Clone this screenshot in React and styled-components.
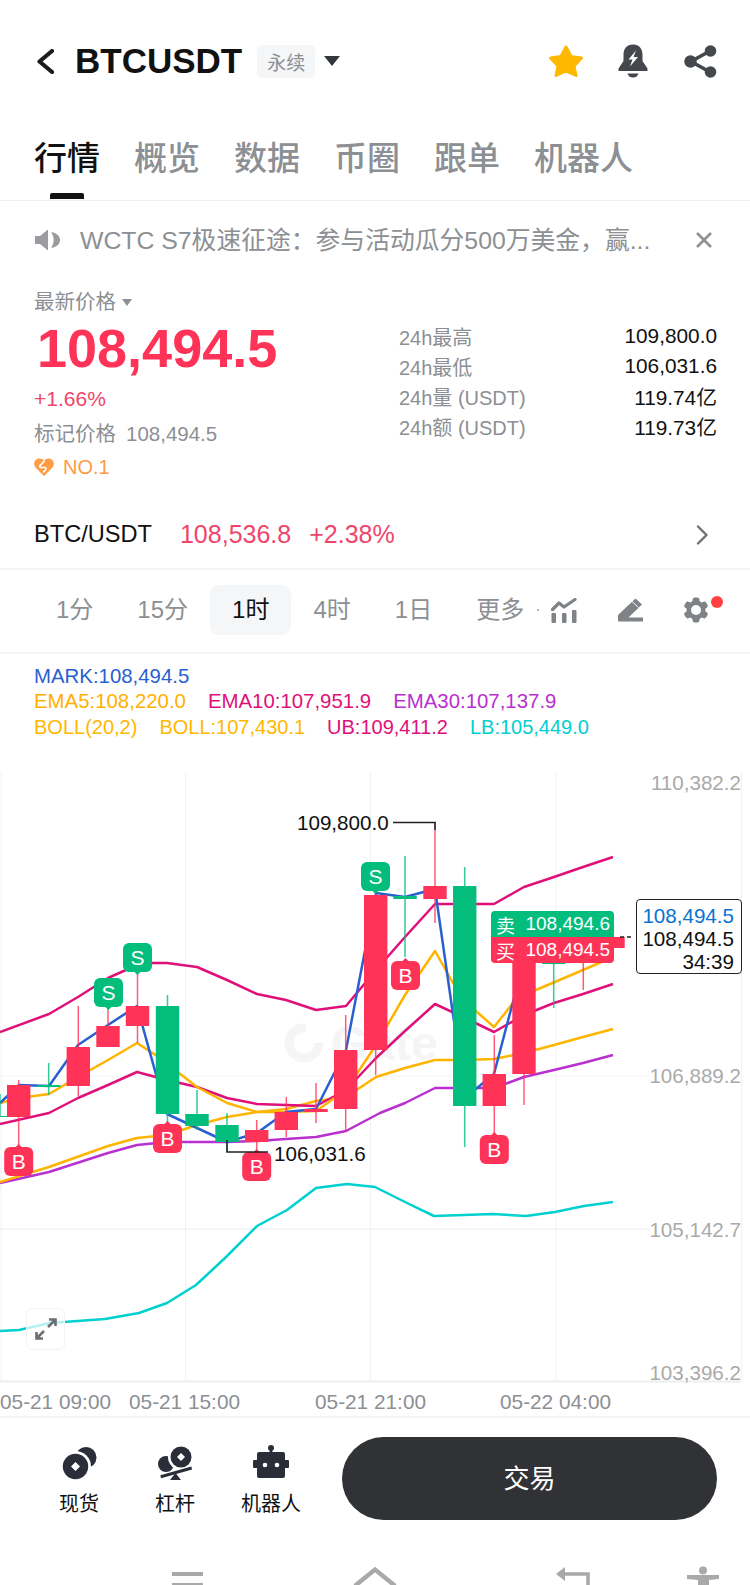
import React from 'react'
import styled, { createGlobalStyle } from 'styled-components'

const GREEN = '#03bd7c'
const RED = '#ff3358'
const GRAY = '#8c8f93'
const FONT = '"Liberation Sans", "Noto Sans CJK SC", sans-serif'

const GlobalStyle = createGlobalStyle`
  html, body {
    margin: 0;
    padding: 0;
    background: #fff;
    font-family: ${FONT};
  }
  * { box-sizing: border-box; }
`

const Page = styled.div`
  width: 750px;
  height: 1585px;
  overflow: hidden;
  background: #fff;
  color: #111;
`

const Header = styled.div`
  height: 122px;
  display: flex;
  align-items: center;
  padding: 0 33px 0 37px;
`
const Title = styled.div`
  margin-left: 21px;
  font-size: 35px;
  font-weight: 700;
  color: #111;
`
const Badge = styled.div`
  margin-left: 15px;
  width: 58px;
  height: 33px;
  border-radius: 5px;
  background: #f5f6f7;
  color: ${GRAY};
  font-size: 19px;
  display: flex;
  align-items: center;
  justify-content: center;
`
const HeaderCaret = styled.div`
  margin-left: 9px;
  width: 0;
  height: 0;
  border-left: 8px solid transparent;
  border-right: 8px solid transparent;
  border-top: 10px solid #33363a;
`
const HeaderIcons = styled.div`
  margin-left: auto;
  display: flex;
  align-items: center;
  gap: 34px;
  & > :last-child { margin-left: 2px; }
`

const Tabs = styled.div`
  height: 79px;
  display: flex;
  gap: 34px;
  padding: 18px 0 0 34px;
  border-bottom: 1px solid #f0f0f0;
`
const Tab = styled.div`
  position: relative;
  height: 38px;
  line-height: 38px;
  font-size: 33px;
  font-weight: 500;
  color: ${p => (p.$active ? '#111' : GRAY)};
  ${p => p.$active && `
    &::after {
      content: '';
      position: absolute;
      left: 16px;
      top: 53px;
      width: 34px;
      height: 6px;
      border-radius: 2px 2px 0 0;
      background: #111;
    }
  `}
`

const Notice = styled.div`
  height: 78px;
  display: flex;
  align-items: center;
  padding: 0 37px 0 35px;
  color: ${GRAY};
`
const NoticeText = styled.div`
  margin: -4px 0 0 20px;
  font-size: 24.8px;
  white-space: nowrap;
`
const NoticeClose = styled.div`
  margin-left: auto;
  display: flex;
`

const Info = styled.div`
  height: 226px;
  display: flex;
`
const InfoLeft = styled.div`
  width: 399px;
  padding: 11px 0 0 34px;
`
const PriceLabel = styled.div`
  height: 24px;
  line-height: 24px;
  font-size: 20.5px;
  color: ${GRAY};
  display: flex;
  align-items: center;
`
const SmallCaret = styled.span`
  margin-left: 6px;
  width: 0;
  height: 0;
  border-left: 5px solid transparent;
  border-right: 5px solid transparent;
  border-top: 7px solid ${GRAY};
`
const Price = styled.div`
  margin: 4px 0 0 3px;
  height: 60px;
  line-height: 60px;
  font-size: 54px;
  font-weight: 700;
  color: ${RED};
`
const Change = styled.div`
  margin-top: 8px;
  height: 26px;
  line-height: 26px;
  font-size: 21px;
  color: #f0456a;
`
const MarkRow = styled.div`
  margin-top: 10px;
  height: 24px;
  line-height: 24px;
  font-size: 20.5px;
  color: ${GRAY};
  display: flex;
  gap: 10px;
`
const RankRow = styled.div`
  margin-top: 9px;
  height: 24px;
  display: flex;
  align-items: center;
  gap: 9px;
  color: #ff9a45;
  font-size: 20px;
`
const InfoRight = styled.div`
  flex: 1;
  padding: 42px 33px 0 0;
`
const StatRow = styled.div`
  height: 30px;
  display: flex;
  align-items: center;
  justify-content: space-between;
  font-size: 20.8px;
`
const StatLabel = styled.span`
  color: ${GRAY};
  font-size: 20px;
`

const PairRow = styled.div`
  height: 65px;
  padding: 0 42px 4px 34px;
  display: flex;
  align-items: center;
  border-bottom: 2px solid #f6f6f6;
  font-size: 25px;
`
const PairName = styled.span`
  color: #111;
  font-size: 23.6px;
`
const PairValue = styled.span`
  margin-left: ${p => p.$gap}px;
  color: #f0456a;
`
const PairChevron = styled.div`
  margin-left: auto;
  display: flex;
`

const IntervalRow = styled.div`
  height: 84px;
  padding: 0 42px 2px 34px;
  display: flex;
  align-items: center;
  border-bottom: 2px solid #f6f6f6;
`
const Interval = styled.div`
  height: 50px;
  line-height: 50px;
  padding: 0 22px;
  border-radius: 9px;
  font-size: 24px;
  white-space: nowrap;
  color: ${p => (p.$active ? '#111' : GRAY)};
  background: ${p => (p.$active ? '#f5f6f7' : 'transparent')};
`
const MoreDot = styled.span`
  width: 2px;
  height: 2px;
  margin-left: -9px;
  background: #b5b7ba;
`
const ToolIcons = styled.div`
  margin-left: auto;
  display: flex;
  align-items: center;
  gap: 41px;
`
const GearWrap = styled.div`
  position: relative;
  display: flex;
`
const RedDot = styled.span`
  position: absolute;
  right: -15px;
  top: -1px;
  width: 12px;
  height: 12px;
  border-radius: 50%;
  background: #ff4040;
`

const Legend = styled.div`
  height: 91px;
  padding: 9.5px 0 0 34px;
`
const LegendLine = styled.div`
  height: 25.75px;
  line-height: 25.75px;
  display: flex;
  gap: 22px;
  font-size: ${p => p.$size || 20.4}px;
`
const LegendItem = styled.span`
  color: ${p => p.$color};
  white-space: nowrap;
`

const ChartArea = styled.div`
  position: relative;
  width: 750px;
  height: 671px;
`
const ChartSvg = styled.svg`
  display: block;
`
const AxisText = styled.text`
  font-family: ${FONT};
  font-size: ${p => p.$size || 20.6}px;
  fill: ${p => p.$color || GRAY};
`
const Watermark = styled.text`
  font-family: ${FONT};
  font-size: 48px;
  font-weight: 700;
  fill: #f5f5f5;
`
const MarkerText = styled.text`
  font-family: ${FONT};
  font-size: 21px;
  fill: #fff;
  text-anchor: middle;
`

const QuoteTags = styled.div`
  position: absolute;
  left: 491px;
  top: 166px;
  width: 123px;
  border-radius: 4px;
  overflow: hidden;
`
const QuoteTag = styled.div`
  height: 26px;
  padding: 0 4px 0 5px;
  display: flex;
  align-items: center;
  justify-content: space-between;
  color: #fff;
  font-size: 19px;
  background: ${p => p.$bg};
`
const PriceBox = styled.div`
  position: absolute;
  left: 636px;
  top: 154px;
  width: 106px;
  height: 75px;
  padding: 4px 7px 0 0;
  border: 1.5px solid #222;
  border-radius: 4px;
  background: #fff;
  font-size: 20.6px;
  line-height: 23px;
  text-align: right;
`
const PriceBoxLine = styled.div`
  color: ${p => p.$color || '#111'};
`
const ExpandButton = styled.div`
  position: absolute;
  left: 26px;
  top: 563px;
  width: 39px;
  height: 42px;
  border: 1px solid #f3f3f3;
  border-radius: 6px;
  background: rgba(255, 255, 255, 0.7);
  display: flex;
  align-items: center;
  justify-content: center;
`

const Footer = styled.div`
  height: 124px;
  padding: 19px 33px 0 31px;
  display: flex;
  align-items: flex-start;
  border-top: 2px solid #f6f6f6;
`
const FooterItem = styled.div`
  width: 96px;
  padding-top: 8px;
  display: flex;
  flex-direction: column;
  align-items: center;
`
const FooterIcon = styled.div`
  height: 40px;
  display: flex;
`
const FooterLabel = styled.div`
  margin-top: 7px;
  height: 24px;
  line-height: 24px;
  font-size: 20px;
  color: #111;
  white-space: nowrap;
`
const TradeButton = styled.div`
  margin-left: 23px;
  width: 375px;
  height: 83px;
  padding-bottom: 4px;
  border-radius: 42px;
  background: #303236;
  color: #fff;
  font-size: 26px;
  display: flex;
  align-items: center;
  justify-content: center;
`

const NavBar = styled.div`
  height: 45px;
  padding: 25px 0 0 170px;
  display: flex;
  overflow: hidden;
`
const NavIcon = styled.svg`
  flex: none;
  margin-left: ${p => p.$ml || 0}px;
  fill: #a9a9a9;
`

const toPoints = pts => pts.map(p => p.join(',')).join(' ')

const lines = [
  {
    color: '#00d0d0',
    pts: [[0, 1331], [19, 1330], [50, 1323], [105, 1319], [139, 1313], [167, 1303], [196, 1285], [225, 1258], [257, 1226], [287, 1210], [316, 1188], [347, 1184], [375, 1187], [407, 1203], [434, 1216], [493, 1214], [526, 1216], [555, 1212], [584, 1206], [613, 1202]],
  },
  {
    color: '#b92fd0',
    pts: [[0, 1183], [49, 1172], [108, 1153], [137, 1145], [167, 1142], [197, 1142], [227, 1142], [257, 1141], [286, 1139], [316, 1137], [346, 1131], [380, 1113], [405, 1103], [435, 1088], [465, 1088], [494, 1088], [524, 1077], [554, 1070], [583, 1063], [613, 1055]],
  },
  {
    color: '#ffb400',
    pts: [[0, 1182], [49, 1167], [108, 1146], [137, 1138], [167, 1135], [197, 1125], [227, 1117], [257, 1112], [286, 1109], [316, 1101], [346, 1097], [376, 1077], [405, 1068], [435, 1060], [465, 1060], [494, 1059], [524, 1053], [554, 1045], [583, 1037], [613, 1029]],
  },
  {
    color: '#e0107a',
    pts: [[0, 1124], [49, 1113], [78, 1098], [108, 1085], [137, 1072], [167, 1080], [197, 1087], [227, 1098], [257, 1104], [286, 1105], [316, 1106], [346, 1090], [376, 1058], [405, 1031], [435, 1004], [465, 1018], [494, 1032], [524, 1015], [554, 1003], [583, 994], [613, 984]],
  },
  {
    color: '#ffb400',
    pts: [[0, 1103], [19, 1098], [49, 1094], [78, 1077], [108, 1060], [137, 1043], [157, 1056], [197, 1087], [227, 1103], [257, 1112], [286, 1112], [316, 1111], [346, 1090], [376, 1045], [405, 995], [435, 951], [453, 983], [477, 1012], [494, 1027], [513, 1003], [536, 990], [583, 970], [613, 957]],
  },
  {
    color: '#e0107a',
    pts: [[0, 1032], [49, 1014], [78, 997], [108, 978], [137, 965], [152, 963], [167, 963], [197, 967], [227, 980], [257, 994], [286, 1000], [316, 1010], [346, 1006], [376, 970], [405, 937], [435, 904], [465, 904], [494, 904], [524, 887], [554, 877], [583, 867], [613, 857]],
  },
  {
    color: '#2a5fd0',
    pts: [[0, 1103], [19, 1085], [49, 1086], [78, 1045], [108, 1025], [137, 1006], [167, 1114], [197, 1128], [227, 1142], [257, 1133], [286, 1112], [316, 1109], [346, 1050], [376, 893], [405, 897], [435, 889], [465, 1098], [494, 1074], [524, 960], [554, 963], [583, 955], [613, 940]],
  },
]

// x, body top, body bottom, wick top, wick bottom, colour
const candles = [
  [0, 1116, 1117, 1094, 1117, GREEN],
  [18.7, 1085, 1117, 1080, 1148, RED],
  [48.7, 1085, 1087, 1063, 1095, GREEN],
  [78.3, 1047, 1086, 1006, 1096, RED],
  [108, 1026, 1047, 1006, 1047, RED],
  [137.5, 1006, 1026, 973, 1043, RED],
  [167.5, 1006, 1114, 995, 1123, GREEN],
  [197, 1114, 1126, 1090, 1130, GREEN],
  [227, 1125, 1142, 1113, 1152, GREEN],
  [256.7, 1130, 1142, 1120, 1153, RED],
  [286.3, 1112, 1130, 1097, 1137, RED],
  [316, 1109, 1112, 1083, 1123, RED],
  [345.7, 1050, 1109, 1015, 1132, RED],
  [375.7, 895, 1050, 890, 1075, RED],
  [405, 896, 899, 856, 957, GREEN],
  [435, 886, 899, 822, 923, RED],
  [464.7, 886, 1106, 867, 1147, GREEN],
  [494.3, 1074, 1106, 1035, 1135, RED],
  [524, 950, 1074, 950, 1105, RED],
  [553.7, 963, 964, 940, 1008, GREEN],
  [583.3, 945, 950, 945, 990, RED],
  [613, 937, 948, 937, 948, RED],
]

const markers = [
  ['S', 137.5, 943, GREEN],
  ['S', 108.5, 978, GREEN],
  ['S', 375.5, 862, GREEN],
  ['B', 167.5, 1124, RED],
  ['B', 18.7, 1147, RED],
  ['B', 256.7, 1152, RED],
  ['B', 405.5, 961, RED],
  ['B', 494.3, 1135, RED],
]

const BackIcon = () => (
  <svg width="17" height="25" viewBox="0 0 17 25">
    <path d="M15 2 L2.5 12.5 L15 23" fill="none" stroke="#1c1c1c" strokeWidth="4.2" strokeLinecap="round" strokeLinejoin="round" />
  </svg>
)
const StarIcon = () => (
  <svg width="36" height="34" viewBox="0 0 36 34">
    <polygon points="18,3 23,12.5 33.5,14 26,22 28,31.5 18,27 8,31.5 10,22 2.5,14 13,12.5" fill="#ffb800" stroke="#ffb800" strokeWidth="3" strokeLinejoin="round" />
  </svg>
)
const BellIcon = () => (
  <svg width="30" height="34" viewBox="0 0 30 34">
    <path d="M15 0.5 C8.5 0.5 5.5 5 5.5 11 V17 L0.5 24.5 V27 H29.5 V24.5 L24.5 17 V11 C24.5 5 21.5 0.5 15 0.5Z" fill="#44474c" />
    <path d="M18 6.5 L10.5 15.5 H14.5 L12 22.5 L20 13 H15.5 Z" fill="#fff" />
    <path d="M9.5 29.5 H20.5 C19.5 32.5 17.5 33.5 15 33.5 C12.5 33.5 10.5 32.5 9.5 29.5Z" fill="#44474c" />
  </svg>
)
const ShareIcon = () => (
  <svg width="33" height="33" viewBox="0 0 33 33">
    <path d="M26 6 L7 16.5 L26 27" fill="none" stroke="#44474c" strokeWidth="3.6" />
    <circle cx="26.5" cy="6" r="5.8" fill="#44474c" />
    <circle cx="6.5" cy="16.5" r="6.2" fill="#44474c" />
    <circle cx="26.5" cy="27" r="5.8" fill="#44474c" />
  </svg>
)
const SpeakerIcon = () => (
  <svg width="25" height="22" viewBox="0 0 25 22">
    <path d="M0 7 H5 L13 0.5 V21.5 L5 15 H0 Z" fill="#9a9c9f" />
    <path d="M16 3 C22 4 25 7 25 11 C25 15 22 18 16 19 C19.5 15 19.5 7 16 3 Z" fill="#9a9c9f" />
  </svg>
)
const CloseIcon = () => (
  <svg width="18" height="18" viewBox="0 0 18 18">
    <path d="M2 2 L16 16 M16 2 L2 16" stroke={GRAY} strokeWidth="2.6" />
  </svg>
)
const RankIcon = () => (
  <svg width="20" height="18" viewBox="0 0 20 18">
    <path d="M10 18 L1.5 9.5 C-1.5 5.5 1 0.5 5.5 0.5 C7.5 0.5 9 1.5 10 3 C11 1.5 12.5 0.5 14.5 0.5 C19 0.5 21.5 5.5 18.5 9.5 Z" fill="#ff9a45" />
    <path d="M10.5 3 L6 7.5 C5 9 7 10 9 9.5 C11 9 13 10 11.5 12 L9 14.5" fill="none" stroke="#fff" strokeWidth="1.6" />
  </svg>
)
const ChevronRight = () => (
  <svg width="12" height="20" viewBox="0 0 12 20">
    <path d="M2 1.5 L10.5 10 L2 18.5" fill="none" stroke="#6e7175" strokeWidth="2.4" strokeLinecap="round" strokeLinejoin="round" />
  </svg>
)
const IndicatorIcon = () => (
  <svg width="26" height="25" viewBox="0 0 26 25">
    <path d="M1.5 11.5 L8 5 L13 9 L24 1.5" fill="none" stroke="#7f8286" strokeWidth="3.2" strokeLinecap="round" strokeLinejoin="round" />
    <rect x="0.5" y="15" width="4.5" height="10" rx="1" fill="#7f8286" />
    <rect x="11" y="15" width="4.5" height="10" rx="1" fill="#7f8286" />
    <rect x="21" y="12" width="4.5" height="13" rx="1" fill="#7f8286" />
  </svg>
)
const PenIcon = () => (
  <svg width="25" height="24" viewBox="0 0 25 24">
    <path d="M0 23.5 V17 L17.5 0.5 L24 6.5 L10.5 19.5 H25 V23.5 Z" fill="#7f8286" />
    <path d="M14 3.5 L20.5 9.5" stroke="#fff" strokeWidth="1" />
  </svg>
)
const GearIcon = () => (
  <svg width="24" height="26" viewBox="0 0 24 26">
    <g fill="#7f8286">
      <circle cx="12" cy="13" r="9.5" />
      <rect x="8.5" y="0.5" width="7" height="25" rx="2.5" />
      <rect x="8.5" y="0.5" width="7" height="25" rx="2.5" transform="rotate(60 12 13)" />
      <rect x="8.5" y="0.5" width="7" height="25" rx="2.5" transform="rotate(120 12 13)" />
    </g>
    <circle cx="12" cy="13" r="5" fill="#fff" />
  </svg>
)
const ExpandIcon = () => (
  <svg width="22" height="22" viewBox="0 0 22 22">
    <path d="M13 9 L20 2 M14 1.5 H20.5 V8 M9 13 L2 20 M1.5 14 V20.5 H8" fill="none" stroke="#6b6e72" strokeWidth="2.6" />
  </svg>
)
const SpotIcon = () => (
  <svg width="36" height="36" viewBox="0 0 36 36">
    <circle cx="25" cy="12.5" r="10.5" fill="#2b2e38" />
    <circle cx="14.5" cy="21.5" r="15.5" fill="#fff" />
    <circle cx="14.5" cy="21.5" r="12.7" fill="#2b2e38" />
    <path d="M14.5 17 L19 21.5 L14.5 26 L10 21.5 Z" fill="#fff" />
  </svg>
)
const MarginIcon = () => (
  <svg width="36" height="36" viewBox="0 0 36 36">
    <circle cx="9" cy="19" r="8" fill="#2b2e38" />
    <circle cx="24" cy="12" r="13" fill="#fff" />
    <circle cx="24" cy="12" r="10.5" fill="#2b2e38" />
    <path d="M24 8 L28 12 L24 16 L20 12 Z" fill="#fff" />
    <path d="M3.7 31.7 L34.7 23" stroke="#2b2e38" strokeWidth="3" />
    <path d="M13 35 L18.5 28 L24 35 Z" fill="#2b2e38" />
  </svg>
)
const RobotIcon = () => (
  <svg width="36" height="34" viewBox="0 0 36 34">
    <circle cx="18" cy="3" r="3" fill="#2b2e38" />
    <rect x="16.7" y="3" width="2.6" height="5" fill="#2b2e38" />
    <rect x="4" y="7" width="28" height="26" rx="2" fill="#2b2e38" />
    <rect x="0" y="15" width="36" height="8" rx="1" fill="#2b2e38" />
    <circle cx="12" cy="20" r="2.3" fill="#fff" />
    <circle cx="24" cy="20" r="2.3" fill="#fff" />
  </svg>
)

const Chart = () => (
  <ChartArea>
    <ChartSvg width="750" height="671" viewBox="0 745 750 671">
      {[1, 185.5, 370.5, 556, 741.5].map(x => (
        <line key={x} x1={x} x2={x} y1="772" y2="1381" stroke="#f2f2f2" strokeWidth="1" />
      ))}
      <line x1="0" x2="650" y1="1076" y2="1076" stroke="#f4f4f4" />
      <line x1="0" x2="650" y1="1229" y2="1229" stroke="#eeeeee" />
      <line x1="0" x2="741" y1="1381.5" y2="1381.5" stroke="#eeeeee" strokeWidth="2" />

      <circle cx="304" cy="1043" r="15" fill="none" stroke="#f5f5f5" strokeWidth="9" strokeDasharray="72 22" />
      <Watermark x="331" y="1060">Gate</Watermark>

      {lines.map((l, i) => (
        <polyline key={i} points={toPoints(l.pts)} fill="none" stroke={l.color} strokeWidth="2.5" strokeLinejoin="round" />
      ))}

      {candles.map(([x, top, bottom, wickTop, wickBottom, color]) => (
        <g key={x}>
          <line x1={x} x2={x} y1={wickTop} y2={wickBottom} stroke={color} strokeWidth="1.5" opacity="0.8" />
          <rect x={x - 11.7} y={top} width="23.4" height={bottom - top} fill={color} />
        </g>
      ))}

      {markers.map(([label, x, y, color]) => (
        <g key={label + x}>
          <rect x={x - 14.5} y={y} width="29" height="29" rx="6" fill={color} />
          <path
            d={label === 'S'
              ? `M${x - 3} ${y + 29} L${x} ${y + 32} L${x + 3} ${y + 29} Z`
              : `M${x - 3} ${y} L${x} ${y - 3} L${x + 3} ${y} Z`}
            fill={color}
          />
          <MarkerText x={x} y={y + 22}>{label}</MarkerText>
        </g>
      ))}

      <path d="M227 1140 V1152 H268" fill="none" stroke="#222" strokeWidth="1.5" />
      <path d="M393 822.5 H435 V830" fill="none" stroke="#222" strokeWidth="1.5" />
      <AxisText x="297" y="830" $color="#111">109,800.0</AxisText>
      <AxisText x="274" y="1161" $color="#111">106,031.6</AxisText>
      <path d="M620 937 H632" stroke="#222" strokeWidth="1.5" strokeDasharray="4 3" />

      <AxisText x="741" y="790" textAnchor="end" $color="#aaaaaa">110,382.2</AxisText>
      <AxisText x="741" y="1083" textAnchor="end" $color="#aaaaaa">106,889.2</AxisText>
      <AxisText x="741" y="1237" textAnchor="end" $color="#aaaaaa">105,142.7</AxisText>
      <AxisText x="741" y="1380" textAnchor="end" $color="#aaaaaa">103,396.2</AxisText>

      <AxisText x="0" y="1409" $size="20.8">05-21 09:00</AxisText>
      <AxisText x="129" y="1409" $size="20.8">05-21 15:00</AxisText>
      <AxisText x="315" y="1409" $size="20.8">05-21 21:00</AxisText>
      <AxisText x="500" y="1409" $size="20.8">05-22 04:00</AxisText>
    </ChartSvg>

    <QuoteTags>
      <QuoteTag $bg={GREEN}><span>卖</span><span>108,494.6</span></QuoteTag>
      <QuoteTag $bg={RED}><span>买</span><span>108,494.5</span></QuoteTag>
    </QuoteTags>
    <PriceBox>
      <PriceBoxLine $color="#0a72d0">108,494.5</PriceBoxLine>
      <PriceBoxLine>108,494.5</PriceBoxLine>
      <PriceBoxLine>34:39</PriceBoxLine>
    </PriceBox>
    <ExpandButton><ExpandIcon /></ExpandButton>
  </ChartArea>
)

const App = () => (
  <>
    <GlobalStyle />
    <Page>
      <Header>
        <BackIcon />
        <Title>BTCUSDT</Title>
        <Badge>永续</Badge>
        <HeaderCaret />
        <HeaderIcons>
          <StarIcon />
          <BellIcon />
          <ShareIcon />
        </HeaderIcons>
      </Header>

      <Tabs>
        <Tab $active>行情</Tab>
        <Tab>概览</Tab>
        <Tab>数据</Tab>
        <Tab>币圈</Tab>
        <Tab>跟单</Tab>
        <Tab>机器人</Tab>
      </Tabs>

      <Notice>
        <SpeakerIcon />
        <NoticeText>WCTC S7极速征途：参与活动瓜分500万美金，赢...</NoticeText>
        <NoticeClose><CloseIcon /></NoticeClose>
      </Notice>

      <Info>
        <InfoLeft>
          <PriceLabel>最新价格<SmallCaret /></PriceLabel>
          <Price>108,494.5</Price>
          <Change>+1.66%</Change>
          <MarkRow><span>标记价格</span><span>108,494.5</span></MarkRow>
          <RankRow><RankIcon />NO.1</RankRow>
        </InfoLeft>
        <InfoRight>
          <StatRow><StatLabel>24h最高</StatLabel><span>109,800.0</span></StatRow>
          <StatRow><StatLabel>24h最低</StatLabel><span>106,031.6</span></StatRow>
          <StatRow><StatLabel>24h量 (USDT)</StatLabel><span>119.74亿</span></StatRow>
          <StatRow><StatLabel>24h额 (USDT)</StatLabel><span>119.73亿</span></StatRow>
        </InfoRight>
      </Info>

      <PairRow>
        <PairName>BTC/USDT</PairName>
        <PairValue $gap={28}>108,536.8</PairValue>
        <PairValue $gap={18}>+2.38%</PairValue>
        <PairChevron><ChevronRight /></PairChevron>
      </PairRow>

      <IntervalRow>
        <Interval>1分</Interval>
        <Interval>15分</Interval>
        <Interval $active>1时</Interval>
        <Interval>4时</Interval>
        <Interval>1日</Interval>
        <Interval>更多</Interval>
        <MoreDot />
        <ToolIcons>
          <IndicatorIcon />
          <PenIcon />
          <GearWrap><GearIcon /><RedDot /></GearWrap>
        </ToolIcons>
      </IntervalRow>

      <Legend>
        <LegendLine>
          <LegendItem $color="#2a5fd0">MARK:108,494.5</LegendItem>
        </LegendLine>
        <LegendLine>
          <LegendItem $color="#ffb000">EMA5:108,220.0</LegendItem>
          <LegendItem $color="#e0107a">EMA10:107,951.9</LegendItem>
          <LegendItem $color="#b92fd0">EMA30:107,137.9</LegendItem>
        </LegendLine>
        <LegendLine $size={20}>
          <LegendItem $color="#ffb800">BOLL(20,2)</LegendItem>
          <LegendItem $color="#ffb800">BOLL:107,430.1</LegendItem>
          <LegendItem $color="#e0107a">UB:109,411.2</LegendItem>
          <LegendItem $color="#00cfd0">LB:105,449.0</LegendItem>
        </LegendLine>
      </Legend>

      <Chart />

      <Footer>
        <FooterItem>
          <FooterIcon><SpotIcon /></FooterIcon>
          <FooterLabel>现货</FooterLabel>
        </FooterItem>
        <FooterItem>
          <FooterIcon><MarginIcon /></FooterIcon>
          <FooterLabel>杠杆</FooterLabel>
        </FooterItem>
        <FooterItem>
          <FooterIcon><RobotIcon /></FooterIcon>
          <FooterLabel>机器人</FooterLabel>
        </FooterItem>
        <TradeButton>交易</TradeButton>
      </Footer>

      <NavBar>
        <NavIcon width="34" height="20" viewBox="0 0 34 20">
          <rect x="2" y="7" width="31" height="4" />
          <rect x="2" y="18" width="31" height="4" />
        </NavIcon>
        <NavIcon $ml={149} width="44" height="20" viewBox="0 0 44 20">
          <path d="M3 20 L22 4.5 L41 20" fill="none" stroke="#a9a9a9" strokeWidth="4.4" strokeLinecap="round" />
        </NavIcon>
        <NavIcon $ml={158} width="36" height="20" viewBox="0 0 36 20">
          <path d="M1 9 L10 2 V16 Z" />
          <path d="M8 9 H33 V20" fill="none" stroke="#a9a9a9" strokeWidth="3.6" />
        </NavIcon>
        <NavIcon $ml={94} width="36" height="20" viewBox="0 0 36 20">
          <circle cx="18" cy="5.5" r="4" />
          <path d="M2 10 H34 V14 L24 15 V20 H13 V15 L2 14 Z" />
        </NavIcon>
      </NavBar>
    </Page>
  </>
)

export default App
